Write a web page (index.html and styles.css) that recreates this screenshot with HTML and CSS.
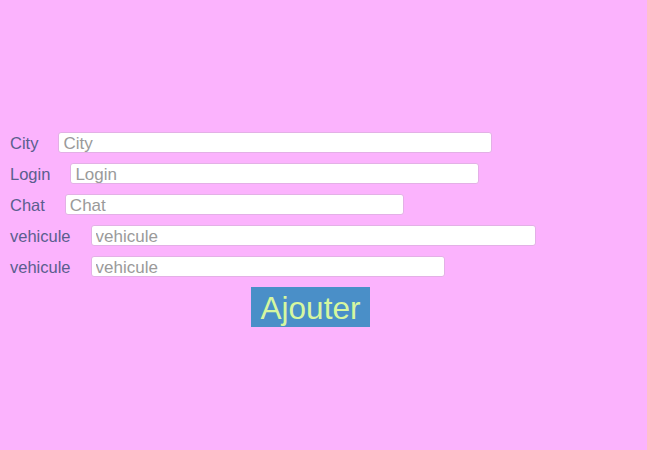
FILE: index.html
```html
<!DOCTYPE html>
<html>
<head>
<meta charset="utf-8">
<link rel="stylesheet" href="styles.css">
</head>
<body>
<form class="form">
  <div class="row"><label class="lbl">City</label><input class="field w-city" placeholder="City"></div>
  <div class="row"><label class="lbl">Login</label><input class="field w-login" placeholder="Login"></div>
  <div class="row"><label class="lbl">Chat</label><input class="field w-chat" placeholder="Chat"></div>
  <div class="row"><label class="lbl">vehicule</label><input class="field w-veh1" placeholder="vehicule"></div>
  <div class="row"><label class="lbl">vehicule</label><input class="field w-veh2" placeholder="vehicule"></div>
  <div class="actions"><button type="button" class="btn">Ajouter</button></div>
</form>
</body>
</html>
```
FILE: styles.css
```css
html, body {
  margin: 0;
  padding: 0;
  background: #fbb3fd;
  height: 100%;
}
body {
  font-family: "Liberation Sans", Arial, sans-serif;
}
.form {
  padding: 132px 0 0 10px;
  display: flex;
  flex-direction: column;
  gap: 10px;
}
.row {
  display: flex;
  align-items: center;
  height: 21px;
}
.lbl {
  font-size: 16.5px;
  line-height: 21px;
  padding-top: 2px;
  margin-right: 20px;
  color: #5a5e8e;
}
.field {
  box-sizing: border-box;
  height: 21px;
  margin: 0;
  padding: 2px 4px 0;
  border: 1px solid #e3b0e6;
  border-radius: 3px;
  background: #fff;
  font-family: "Liberation Sans", Arial, sans-serif;
  font-size: 17px;
  line-height: 18px;
  color: #333;
  outline: none;
}
.field::placeholder {
  color: #9a9a9a;
}
.w-city { width: 434px; }
.w-login { width: 409px; }
.w-chat { width: 339px; }
.w-veh1 { width: 445px; }
.w-veh2 { width: 354px; }
.actions {
  padding-left: 241px;
}
.btn {
  width: 119px;
  height: 40px;
  margin: 0;
  padding: 2px 0 0;
  border: none;
  background: #4a8fc8;
  color: #d6f7a0;
  font-family: "Liberation Sans", Arial, sans-serif;
  font-size: 31.5px;
}
```
